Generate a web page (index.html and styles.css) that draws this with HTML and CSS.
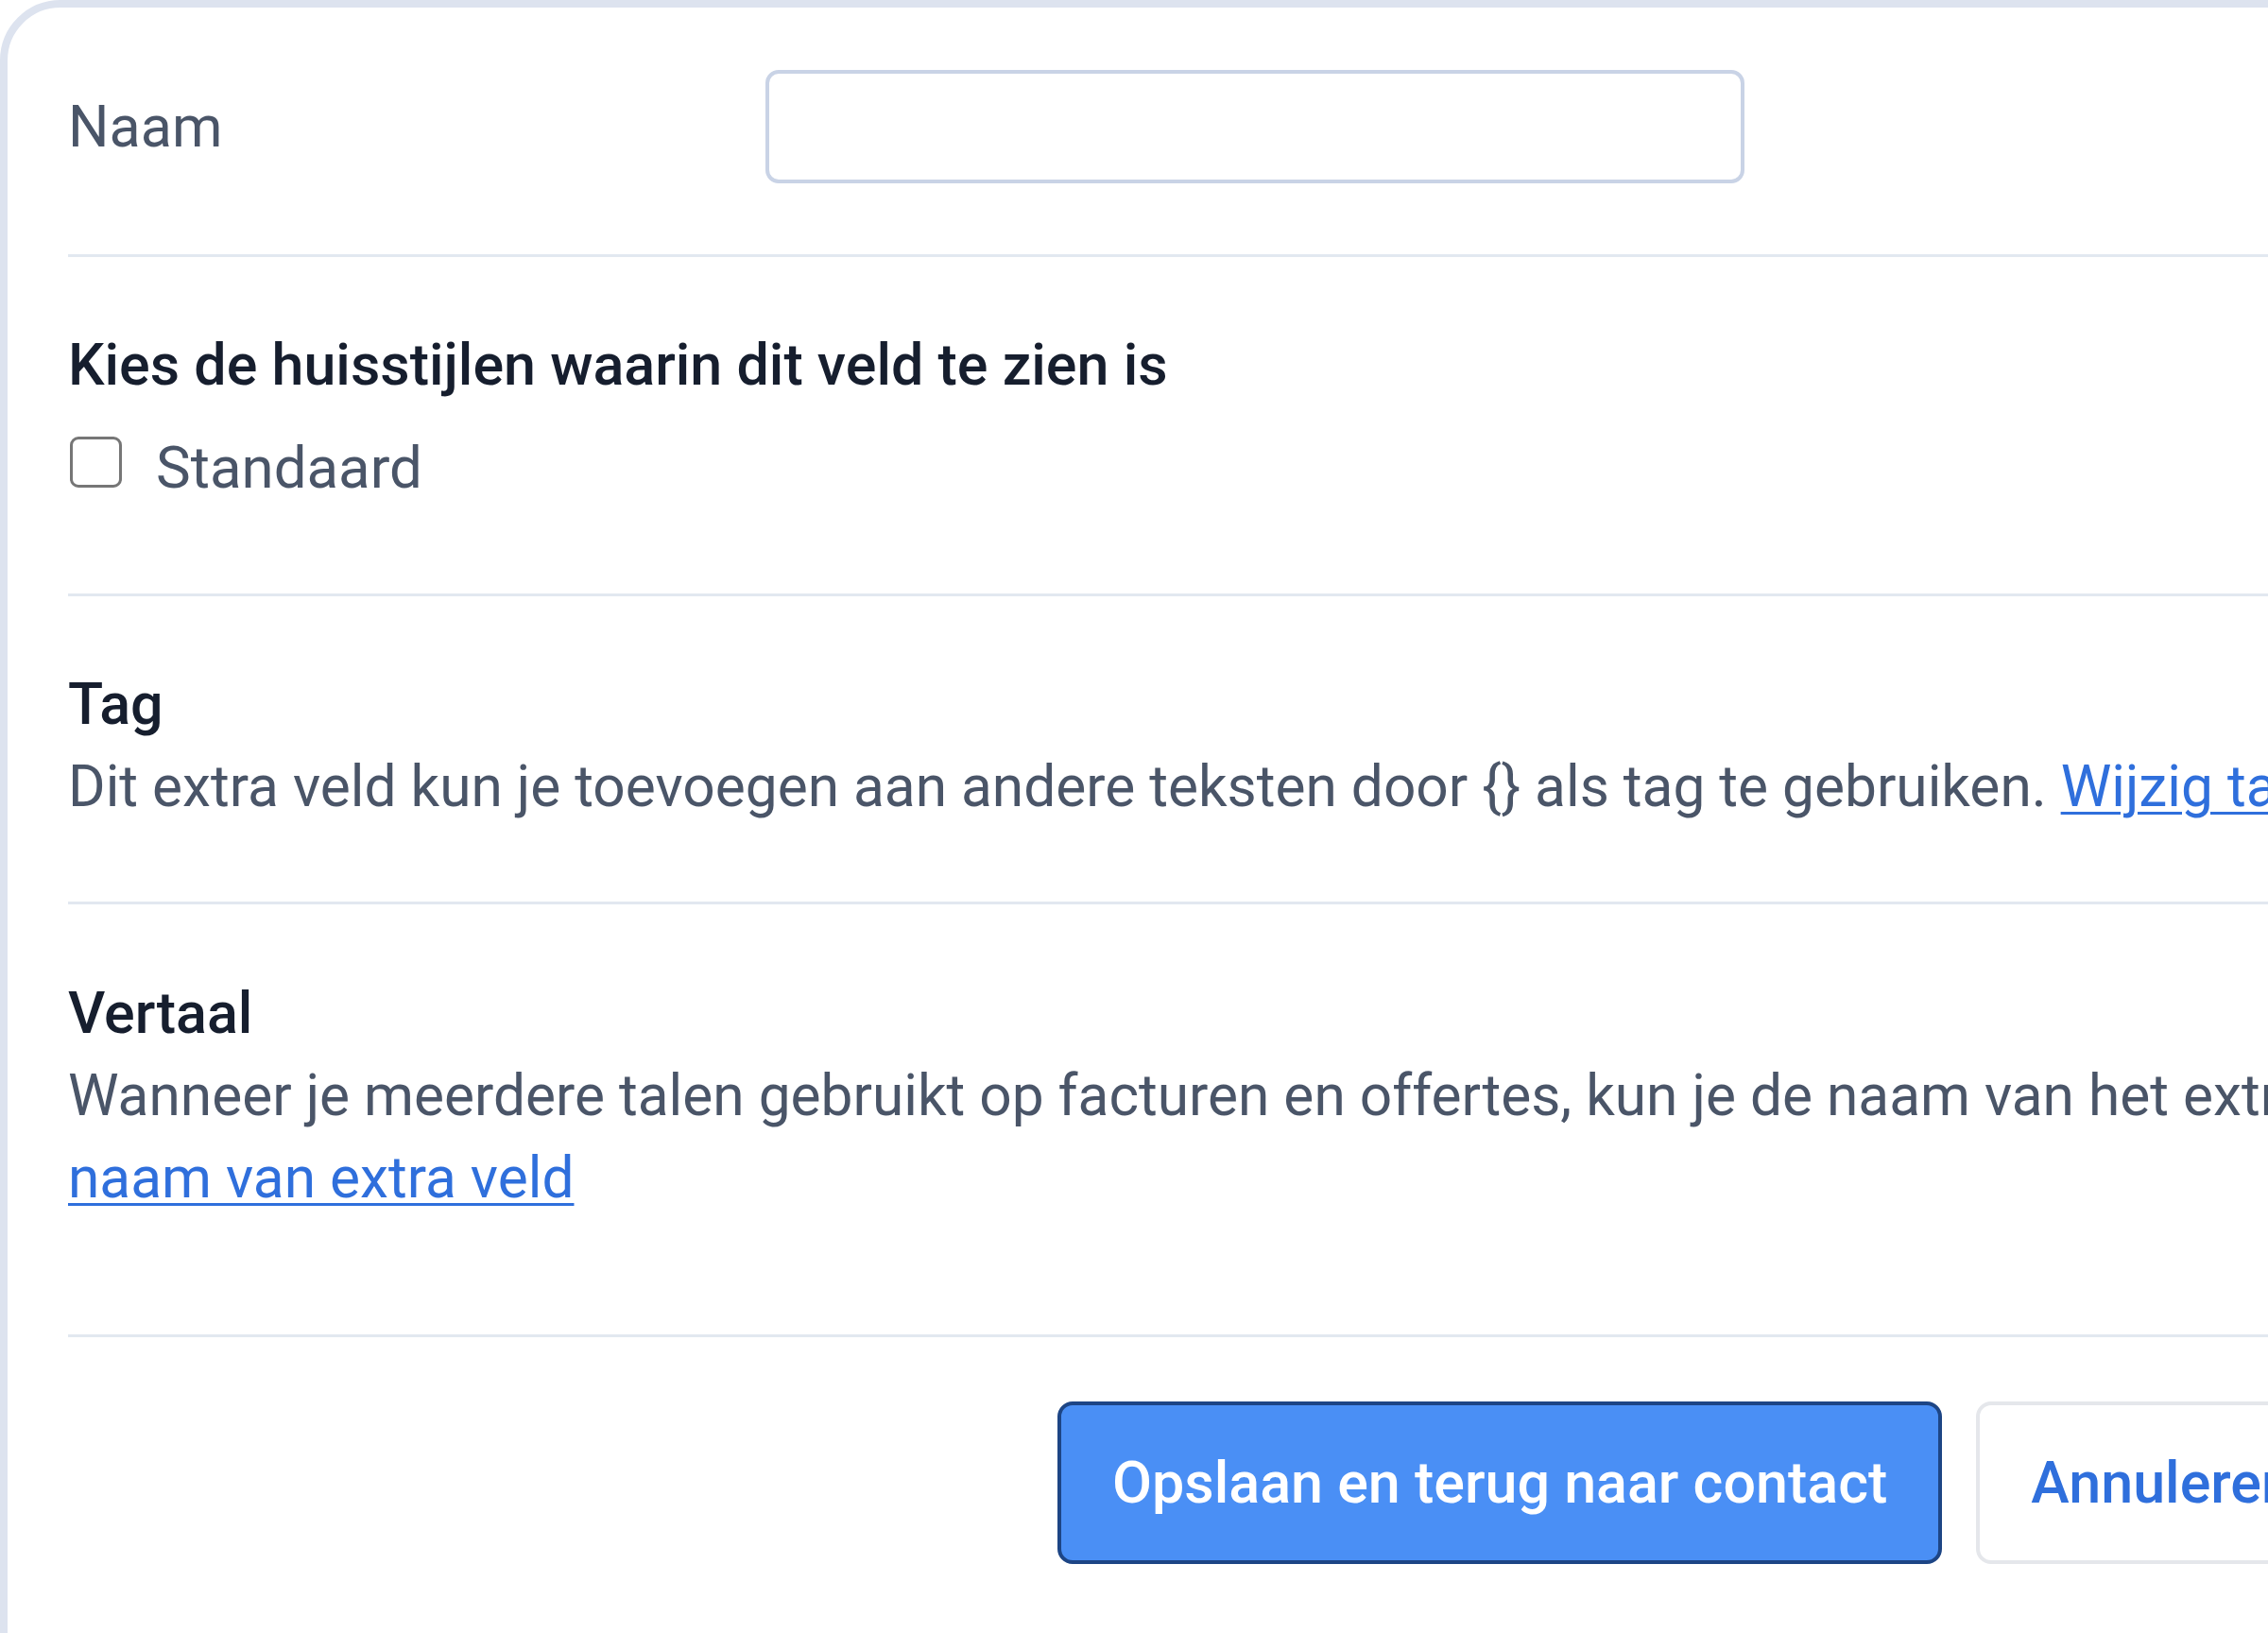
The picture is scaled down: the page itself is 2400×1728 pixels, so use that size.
FILE: index.html
```html
<!DOCTYPE html>
<html lang="nl">
<head>
<meta charset="utf-8">
<title>Extra veld</title>
<link rel="stylesheet" href="styles.css">
</head>
<body>
<div class="card">
  <div class="row row-name">
    <label class="field-label" for="naam">Naam</label>
    <input class="text-input" id="naam" type="text">
  </div>
  <div class="section section-brand">
    <h3 class="heading heading-tight">Kies de huisstijlen waarin dit veld te zien is</h3>
    <label class="check-row">
      <input class="check" type="checkbox">
      <span class="check-text">Standaard</span>
    </label>
  </div>
  <div class="section section-tag">
    <h3 class="heading">Tag</h3>
    <p class="desc">Dit extra veld kun je toevoegen aan andere teksten door {} als tag te gebruiken. <a class="link" href="#">Wijzig tag</a></p>
  </div>
  <div class="section section-translate">
    <h3 class="heading">Vertaal</h3>
    <p class="desc">Wanneer je meerdere talen gebruikt op facturen en offertes, kun je de naam van het extra veld vertalen. <a class="link" href="#">Vertaal</a><br><a class="link" href="#">naam van extra veld</a></p>
  </div>
  <div class="footer">
    <button class="btn btn-primary" type="button">Opslaan en terug naar contact</button>
    <button class="btn btn-secondary" type="button">Annuleren</button>
  </div>
</div>
</body>
</html>
```

FILE: styles.css
```css
html, body {
  margin: 0;
  padding: 0;
  background: #ffffff;
  width: 2400px;
  height: 1728px;
  overflow: hidden;
}

body {
  font-family: Roboto, "Noto Sans", "Liberation Sans", sans-serif;
  font-size: 60.4px;
  line-height: 87px;
  color: #4a5568;
}

.card {
  box-sizing: border-box;
  width: 2900px;
  min-height: 1900px;
  border: 8px solid #dde3ef;
  border-radius: 64px;
  padding: 0 0 0 64px;
  background: #ffffff;
}

.row-name {
  display: flex;
  align-items: center;
  padding: 66px 0 75px;
  border-bottom: 3px solid #e2e8f0;
}

.field-label {
  width: 738px;
  flex: none;
  font-size: 61px;
  color: #4a5568;
}

.text-input {
  box-sizing: border-box;
  width: 1036px;
  height: 120px;
  border: 4px solid #c9d3e6;
  border-radius: 14px;
  background: #ffffff;
  font: inherit;
  margin: 0;
  outline: none;
}

.section {
  border-bottom: 3px solid #e2e8f0;
}

.section-brand {
  padding: 71px 0 89px;
}

.section-tag {
  padding: 71px 0 78px;
}

.section-translate {
  padding: 72px 0 122px;
}

.heading {
  margin: 0;
  font-size: 61px;
  line-height: 87px;
  font-weight: 500;
  color: #161e2e;
}

.heading-tight {
  margin-bottom: 22px;
}

.check-row {
  display: flex;
  align-items: flex-start;
  gap: 36px;
}

.check {
  appearance: none;
  -webkit-appearance: none;
  box-sizing: border-box;
  width: 55px;
  height: 54px;
  margin: 10px 0 0 2px;
  border: 3px solid #767676;
  border-radius: 9px;
  background: #ffffff;
  flex: none;
}

.check-text {
  font-size: 61.8px;
  color: #4a5568;
}

.desc {
  margin: 0;
  white-space: nowrap;
  color: #4a5568;
}

.link {
  color: #2f6fdc;
  text-decoration: underline;
  text-decoration-thickness: 3px;
  text-underline-offset: 6px;
}

.footer {
  display: flex;
  gap: 36px;
  padding: 68px 0 0 1047px;
}

.btn {
  box-sizing: border-box;
  height: 172px;
  padding: 0 54px;
  border-radius: 16px;
  font-family: Roboto, "Noto Sans", "Liberation Sans", sans-serif;
  font-size: 61px;
  font-weight: 500;
  line-height: 87px;
  cursor: pointer;
  flex: none;
}

.btn-primary {
  background: #4a8ff5;
  border: 4px solid #1d4585;
  color: #ffffff;
}

.btn-secondary {
  background: #ffffff;
  border: 4px solid #e5e7eb;
  color: #2f6fdc;
}
```
